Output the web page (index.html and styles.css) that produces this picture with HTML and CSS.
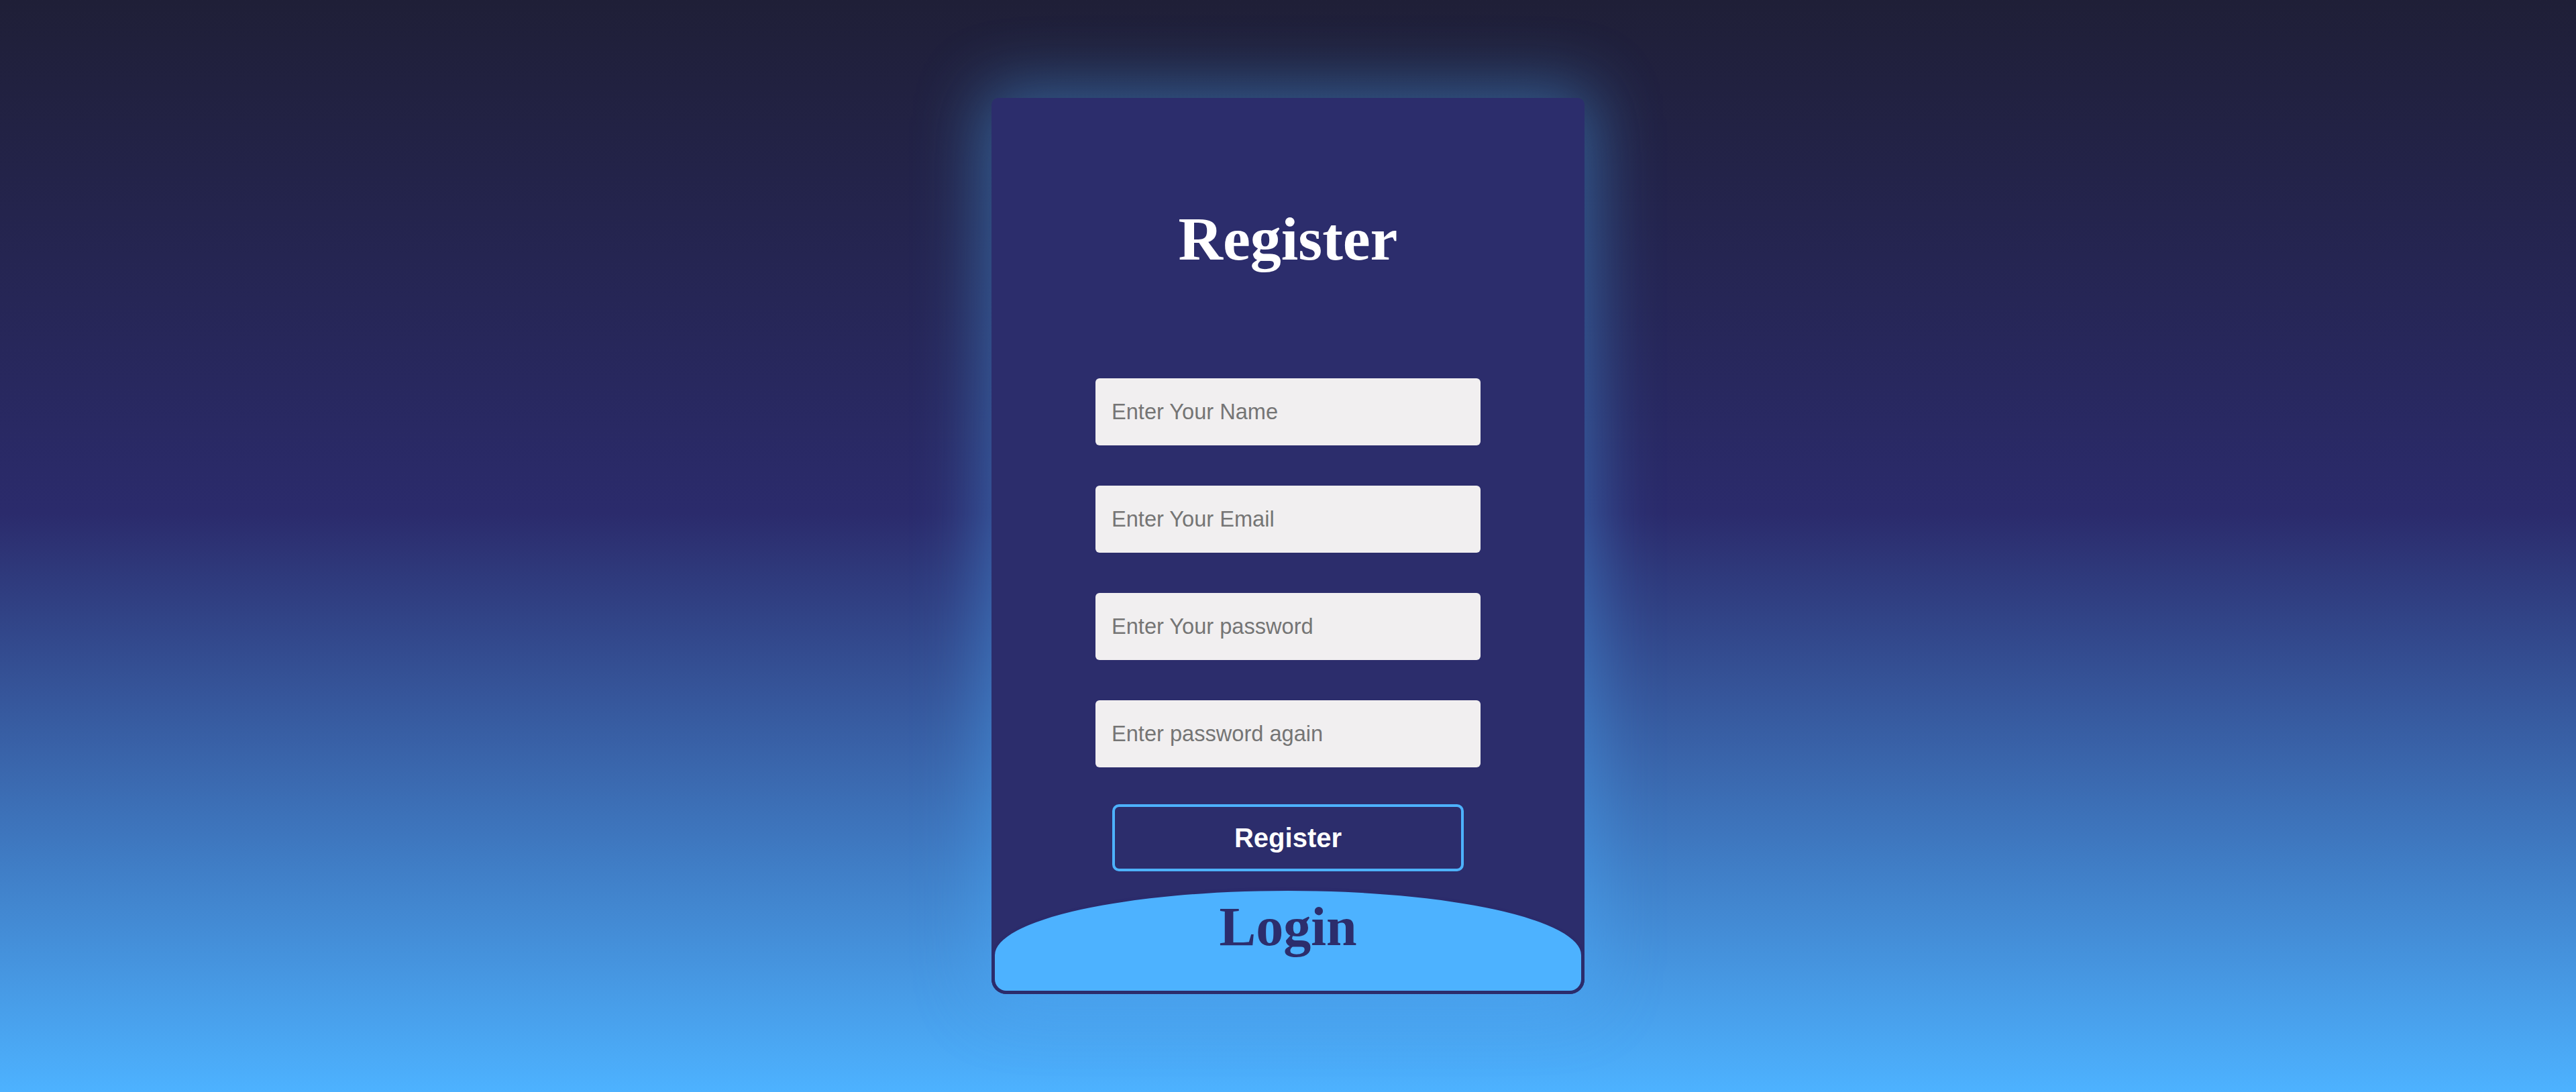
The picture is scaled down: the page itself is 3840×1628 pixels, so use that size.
FILE: index.html
```html
<!DOCTYPE html>
<html lang="en">
<head>
<meta charset="utf-8">
<title>Register</title>
<link rel="stylesheet" href="styles.css">
</head>
<body>
  <main class="card">
    <form class="register-form">
      <h1 class="title">Register</h1>
      <div class="fields">
        <input class="field" type="text" placeholder="Enter Your Name">
        <input class="field" type="email" placeholder="Enter Your Email">
        <input class="field" type="password" placeholder="Enter Your password">
        <input class="field" type="password" placeholder="Enter password again">
      </div>
      <button class="btn" type="button">Register</button>
    </form>
    <div class="login">
      <h2 class="login-title">Login</h2>
    </div>
  </main>
</body>
</html>
```
FILE: styles.css
```css
html, body {
  margin: 0;
  padding: 0;
}
body {
  min-height: 100vh;
  display: flex;
  align-items: center;
  justify-content: center;
  background: linear-gradient(to bottom, #1f1f37 0%, #2b2b6c 47%, #4db2ff 100%);
  font-family: "Liberation Sans", Arial, sans-serif;
}
.card {
  width: 884px;
  height: 1336px;
  box-sizing: border-box;
  background: #2c2d6c;
  border-radius: 10px 10px 22px 22px;
  box-shadow: 0 0 100px 12px rgba(77, 178, 255, 0.45);
  display: flex;
  flex-direction: column;
  align-items: center;
}
.register-form {
  display: flex;
  flex-direction: column;
  align-items: center;
  width: 100%;
  padding-top: 164px;
}
.title {
  margin: 0;
  font-family: "Liberation Serif", "Times New Roman", serif;
  font-weight: bold;
  font-size: 92px;
  line-height: 92px;
  color: #ffffff;
}
.fields {
  margin-top: 162px;
  display: flex;
  flex-direction: column;
  gap: 60px;
}
.field {
  width: 574px;
  height: 100px;
  box-sizing: border-box;
  border: none;
  outline: none;
  border-radius: 6px;
  background: #f1eff0;
  padding: 0 24px;
  font-family: "Liberation Sans", Arial, sans-serif;
  font-size: 32.6px;
  color: #333;
}
.field::placeholder {
  color: #757575;
  opacity: 1;
}
.btn {
  margin-top: 55px;
  width: 524px;
  height: 100px;
  box-sizing: border-box;
  border: 4px solid #4db2ff;
  border-radius: 10px;
  background: transparent;
  color: #ffffff;
  font-family: "Liberation Sans", Arial, sans-serif;
  font-weight: bold;
  font-size: 40px;
  padding: 0;
}
.login {
  margin-top: 24px;
  width: 100%;
  height: 160px;
  box-sizing: border-box;
  border: 5px solid #2b2b6b;
  border-radius: 50% 50% 22px 22px / 101px 101px 22px 22px;
  background: #4db2ff;
  display: flex;
  justify-content: center;
}
.login-title {
  margin: 0;
  padding-top: 13px;
  font-family: "Liberation Serif", "Times New Roman", serif;
  font-weight: bold;
  font-size: 82px;
  line-height: 82px;
  color: #2c2d6c;
}
```
